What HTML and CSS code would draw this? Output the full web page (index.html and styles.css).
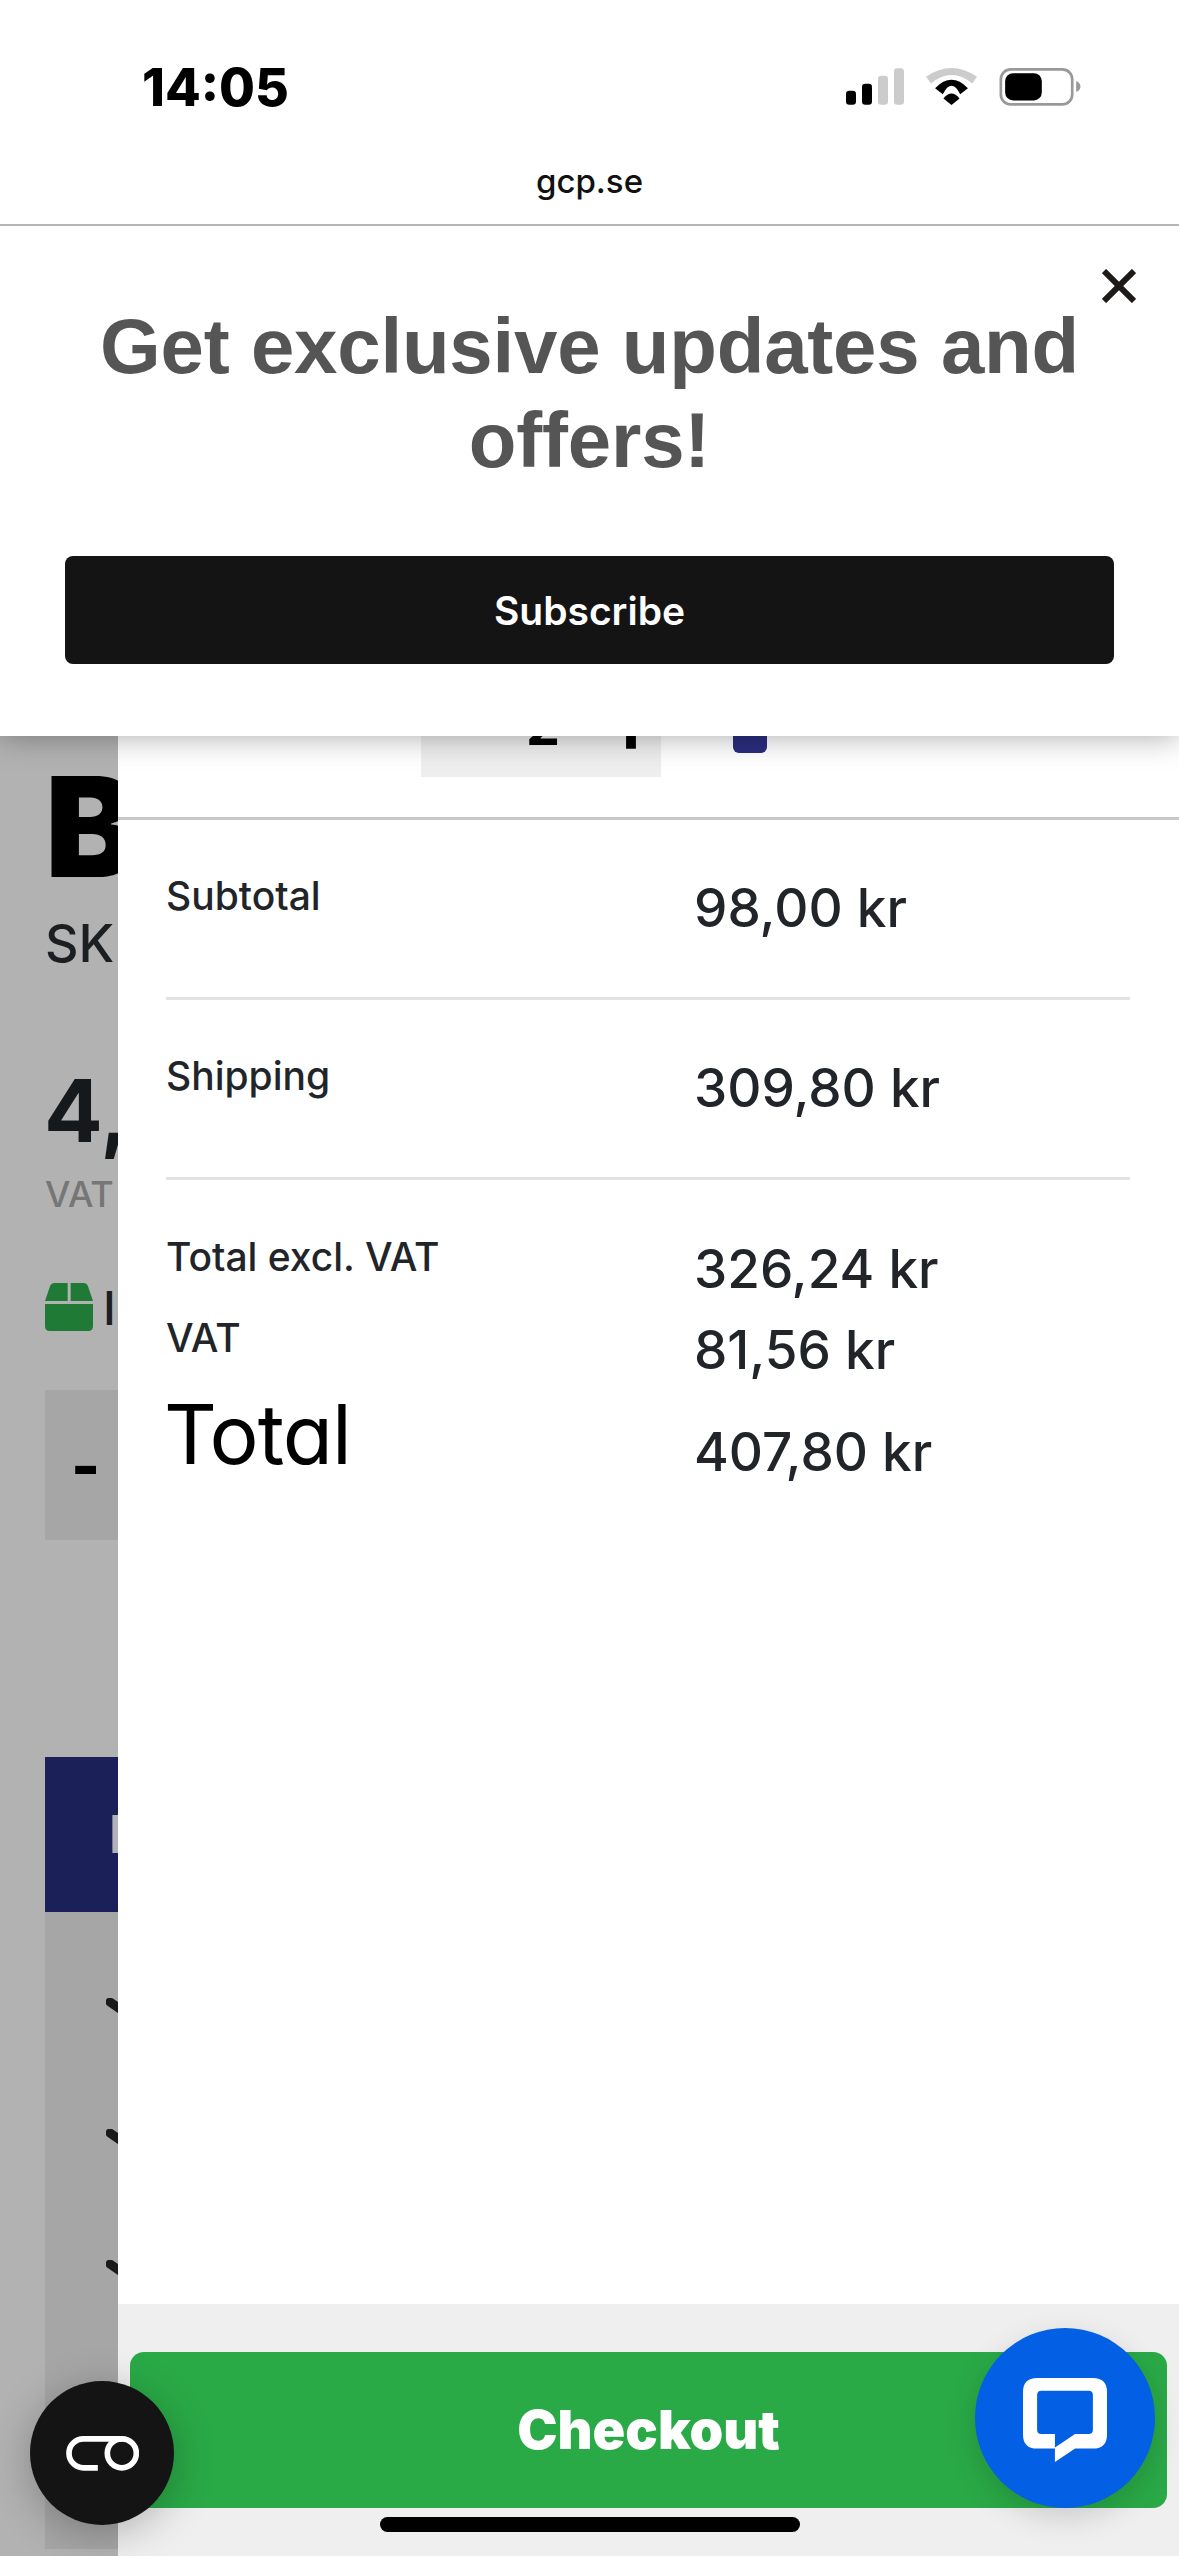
FILE: index.html
```html
<!DOCTYPE html>
<html lang="en">
<head>
<meta charset="utf-8">
<title>gcp.se</title>
<link rel="stylesheet" href="styles.css">
</head>
<body>
<div class="screen">
  <header class="chrome">
    <div class="status">
      <span class="time">14:05</span>
      <div class="status-icons">
        <svg class="ic-signal" viewBox="138 87 174 110"><rect x="138" y="155" width="30" height="42" rx="10" fill="#000"/><rect x="186" y="134" width="30" height="63" rx="10" fill="#000"/><rect x="234" y="110" width="30" height="87" rx="10" fill="#ccc"/><rect x="282" y="87" width="30" height="110" rx="10" fill="#ccc"/></svg>
        <svg class="ic-wifi" viewBox="378 87 152 110"><path d="M378 113Q454 61 530 113L516 133Q454 83 393 133Z" fill="#ccc"/><path d="M405 147Q454 97 503 147L480 165Q454 115 428 165Z" fill="#000"/><path d="M430 178Q454 148 478 178L454 197Z" fill="#000"/></svg>
        <svg class="ic-battery" viewBox="598 85 245 115"><rect x="602" y="89" width="216" height="106" rx="30" fill="none" stroke="#999" stroke-width="8"/><rect x="615" y="101" width="111" height="82" rx="24" fill="#000"/><path d="M830 124Q843 130 843 141Q843 152 830 158Z" fill="#999"/></svg>
      </div>
    </div>
    <div class="address">gcp.se</div>
  </header>

  <main class="stage">
    <section class="page">
      <h1 class="p-title">B</h1>
      <div class="p-sku">SK</div>
      <div class="p-price">4,</div>
      <div class="p-vat">VAT</div>
      <div class="p-stock">
        <svg class="ic-box" viewBox="45 36 144 144"><path d="M45 90L60 46Q64 36 74 36H113V90Z M122 36H160Q170 36 174 46L189 90H122Z M45 99H189V166Q189 180 175 180H59Q45 180 45 166Z" fill="#1f7a35"/></svg>
        <span>I</span>
      </div>
      <div class="p-qty">-</div>
      <div class="p-buy">Buy</div>
      <ul class="p-list">
        <li><svg class="ic-check" viewBox="0 0 60 60"><path d="M4 4L30 22" fill="none" stroke="#1a1a1a" stroke-width="9" stroke-linecap="round"/></svg></li>
        <li><svg class="ic-check" viewBox="0 0 60 60"><path d="M4 4L30 22" fill="none" stroke="#1a1a1a" stroke-width="9" stroke-linecap="round"/></svg></li>
        <li><svg class="ic-check" viewBox="0 0 60 60"><path d="M4 4L30 22" fill="none" stroke="#1a1a1a" stroke-width="9" stroke-linecap="round"/></svg></li>
      </ul>
    </section>

    <aside class="drawer">
      <div class="cart-item">
        <div class="qty"><span class="qty-n">2</span><span class="qty-plus">+</span></div>
        <div class="swatch"></div>
      </div>
      <div class="summary">
        <div class="row">
          <span class="lbl">Subtotal</span><span class="val">98,00 kr</span>
        </div>
        <div class="row">
          <span class="lbl">Shipping</span><span class="val">309,80 kr</span>
        </div>
        <div class="totals">
          <span class="lbl">Total excl. VAT</span><span class="val">326,24 kr</span>
          <span class="lbl">VAT</span><span class="val">81,56 kr</span>
          <span class="grand">Total</span><span class="val val-grand">407,80 kr</span>
        </div>
      </div>
      <footer class="foot">
        <button class="checkout">Checkout</button>
      </footer>
    </aside>

    <div class="popup">
      <svg class="close" viewBox="0 0 34 34"><path d="M2 2L32 32M32 2L2 32" stroke="#1d1a17" stroke-width="6"/></svg>
      <h2 class="popup-title">Get exclusive updates and offers!</h2>
      <button class="subscribe">Subscribe</button>
    </div>

    <div class="fab-co">
      <svg viewBox="138 197 218 105"><path d="M305 205.500H190A43.500 43.500 0 0 0 190 292.500H233" fill="none" stroke="#fff" stroke-width="17"/><circle cx="305" cy="249" r="43.500" fill="none" stroke="#fff" stroke-width="17"/></svg>
    </div>
    <div class="fab-chat">
      <svg viewBox="190 178 250 250"><path fill="#fff" fill-rule="evenodd" d="M232 178H398Q440 178 440 220V346Q440 388 398 388H345L285 428V388H232Q190 388 190 346V220Q190 178 232 178Z M245 216H385Q398 216 398 229V332Q398 345 385 345H345L285 385V345H245Q232 345 232 332V229Q232 216 245 216Z"/></svg>
    </div>
    <div class="home-bar"></div>
  </main>
</div>
</body>
</html>
```
FILE: styles.css
```css
* { box-sizing: border-box; }
html, body { margin: 0; padding: 0; }
body { width: 1179px; height: 2556px; overflow: hidden; background: #fff; font-family: Inter, "Liberation Sans", sans-serif; }
.screen { width: 1179px; height: 2556px; display: flex; flex-direction: column; }

.chrome { height: 226px; padding-top: 58px; background: #fff; border-bottom: 2px solid #b5b5b5; flex: none; }
.status { display: flex; justify-content: space-between; align-items: flex-start; padding: 0 98px 0 142px; height: 60px; }
.time { font-size: 52px; line-height: 60px; font-weight: 800; color: #000; }
.status-icons { display: flex; gap: 22px; margin-top: 10px; }
.ic-signal { width: 58px; height: 37px; }
.ic-wifi { width: 51px; height: 37px; }
.ic-battery { width: 82px; height: 38px; }
.address { margin-top: 43px; text-align: center; font-size: 33px; line-height: 40px; font-weight: 500; color: #111; }

.stage { position: relative; flex: 1; overflow: hidden; background: #b2b2b2; }

.page { padding: 531px 0 0 45px; color: #16191b; }
.p-title { margin: 0; font-size: 139px; line-height: 139px; font-weight: 900; color: #000; }
.p-sku { margin-top: 18px; font-size: 52px; line-height: 60px; font-weight: 500; color: #1c1f22; }
.p-price { margin-top: 93px; margin-left: -1px; font-size: 87px; line-height: 87px; font-weight: 700; }
.p-vat { margin-top: 20px; font-size: 36px; line-height: 40px; font-weight: 500; color: #767676; }
.p-stock { margin-top: 69px; display: flex; align-items: center; gap: 10px; height: 48px; font-size: 47px; font-weight: 500; color: #1b1f23; }
.ic-box { width: 48px; height: 48px; }
.p-qty { margin-top: 59px; width: 140px; height: 150px; padding-left: 26px; display: flex; align-items: center; background: #a6a6a6; font-size: 62px; font-weight: 800; color: #000; }
.p-buy { margin-top: 217px; height: 155px; padding-left: 64px; display: flex; align-items: center; background: #1c2058; color: #b2b2b8; font-size: 52px; font-weight: 700; }
.p-list { list-style: none; margin: 0; padding: 86px 0 0 61px; height: 637px; background: #a6a6a6; }
.p-list li { height: 131px; }
.ic-check { display: block; width: 60px; height: 60px; }

.drawer { position: absolute; left: 118px; top: 0; right: 0; bottom: 0; display: flex; flex-direction: column; background: #fff; }
.cart-item { height: 594px; flex: none; display: flex; align-items: flex-end; padding: 0 0 40px 303px; border-bottom: 3px solid #c8c8c8; }
.qty { width: 240px; height: 150px; display: flex; align-items: flex-end; justify-content: space-between; padding: 0 6px 21px 105px; background: #eee; color: #000; line-height: 60px; font-weight: 700; }
.qty-n { font-size: 54px; }
.qty-plus { font-size: 70px; font-weight: 800; }
.swatch { width: 34px; height: 60px; margin: 0 0 24px 72px; background: #2a2e7e; border-radius: 0 0 6px 6px; }

.summary { flex: 1; padding: 0 49px 0 48px; }
.row { display: grid; grid-template-columns: 529px 1fr; align-items: start; height: 180px; padding-top: 49px; border-bottom: 3px solid #e3e3e3; }
.totals { display: grid; grid-template-columns: 529px 1fr; grid-auto-rows: 81px; padding-top: 50px; align-items: start; }
.lbl { font-size: 39px; line-height: 54px; font-weight: 500; color: #212529; }
.val { margin-left: -1px; font-size: 53px; line-height: 78px; font-weight: 500; color: #212529; }
.grand { margin: -7px 0 0 -2px; font-size: 82px; line-height: 100px; font-weight: 400; letter-spacing: -1px; color: #000; font-feature-settings: "cv11"; }
.val-grand { margin-top: 21px; }

.foot { flex: none; height: 252px; padding: 48px 12px; background: #efefef; }
.checkout { display: block; width: 100%; height: 156px; padding-bottom: 2px; border: 0; border-radius: 14px; background: #2aa947; color: #fff; font-family: Inter, "Liberation Sans", sans-serif; font-size: 54px; font-weight: 900; }

.popup { position: absolute; left: 0; right: 0; top: 0; height: 510px; padding: 73px 65px 0; background: #fff; box-shadow: 0 0 30px rgba(0,0,0,.35); }
.close { position: absolute; right: 43px; top: 43px; width: 34px; height: 34px; }
.popup-title { margin: 0; text-align: center; font-family: "Liberation Sans", sans-serif; font-size: 78px; line-height: 94px; font-weight: 700; letter-spacing: -.2px; color: #555; }
.subscribe { display: block; width: 100%; height: 108px; margin-top: 69px; padding-top: 2px; border: 0; border-radius: 8px; background: #141414; color: #fff; font-family: Inter, "Liberation Sans", sans-serif; font-size: 39px; font-weight: 600; }

.fab-co { position: absolute; left: 30px; top: 2155px; width: 144px; height: 144px; border-radius: 50%; background: #141414; display: flex; align-items: center; justify-content: center; box-shadow: 0 8px 40px rgba(0,0,0,.25); }
.fab-co svg { width: 73px; height: 35px; }
.fab-chat { position: absolute; left: 975px; top: 2102px; width: 180px; height: 180px; border-radius: 50%; background: #035fe4; display: flex; align-items: center; justify-content: center; box-shadow: 0 10px 30px rgba(0,0,0,.15); }
.fab-chat svg { width: 84px; height: 84px; margin-top: 4px; }
.home-bar { position: absolute; left: 380px; top: 2291px; width: 420px; height: 15px; border-radius: 8px; background: #000; }
```
